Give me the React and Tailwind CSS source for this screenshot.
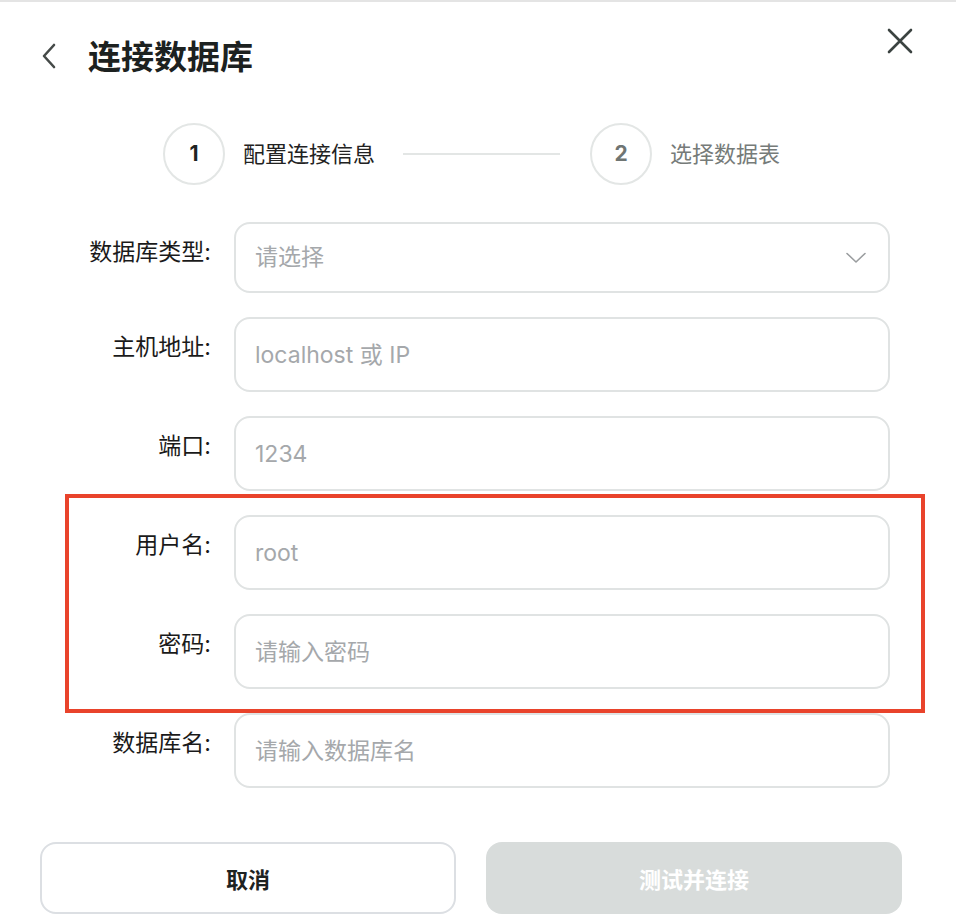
import { useState } from "react";

const fields = [
  { label: "主机地址:", placeholder: "localhost 或 IP" },
  { label: "端口:", placeholder: "1234" },
  { label: "用户名:", placeholder: "root" },
  { label: "密码:", placeholder: "请输入密码" },
  { label: "数据库名:", placeholder: "请输入数据库名" },
];

const Step = ({ n, text, active }) => (
  <div className="flex items-center gap-[18px]">
    <div
      className={`w-[62px] h-[62px] rounded-full border-2 border-[#e3e6e5] flex items-center justify-center text-[21px] font-bold ${
        active ? "text-[#1f2322]" : "text-[#6f7573]"
      }`}
    >
      {n}
    </div>
    <span className={`text-[22px] ${active ? "text-[#222]" : "text-[#767b79]"}`}>{text}</span>
  </div>
);

const App = () => {
  const [values, setValues] = useState({});

  return (
    <div className="w-[956px] h-[922px] bg-white relative overflow-hidden font-['Inter','Noto_Sans_CJK_SC',sans-serif]">
      <div className="h-[2px] bg-[#e4e4e4]" />

      <div className="flex justify-between pl-[40px] pr-[42px] pt-[22px]">
        <div className="flex items-center h-[64px] gap-[30px]">
          <svg width="18" height="26" viewBox="0 0 18 26" fill="none">
            <polyline points="14,2 4,13 14,24" stroke="#454a48" strokeWidth="2.6" strokeLinecap="round" strokeLinejoin="round" />
          </svg>
          <h1 className="text-[33px] font-bold text-[#1c2120] font-['Noto_Sans_CJK_SC',sans-serif]">连接数据库</h1>
        </div>
        <button className="mt-[3px] self-start">
          <svg width="28" height="28" viewBox="0 0 28 28" fill="none">
            <path d="M3 3 L25 25 M25 3 L3 25" stroke="#3b4341" strokeWidth="2.6" strokeLinecap="round" />
          </svg>
        </button>
      </div>

      <div className="flex items-center mt-[35px] pl-[163px] h-[62px]">
        <Step n="1" text="配置连接信息" active />
        <div className="w-[157px] h-[2px] bg-[#e3e6e5] ml-[28px] mr-[30px]" />
        <Step n="2" text="选择数据表" />
      </div>

      <div className="flex flex-col gap-[24px] mt-[37px]">
        <div className="flex gap-[23px]">
          <label className="w-[211px] text-right text-[23px] leading-[28px] pt-[16px] text-[#1a1a1a]">数据库类型:</label>
          <div className="w-[656px] h-[71px] rounded-[16px] border-2 border-[#e0e3e3] flex items-center justify-between pl-[19px] pr-[22px]">
            <span className="text-[23px] text-[#a5a8ab]">请选择</span>
            <svg width="20" height="12" viewBox="0 0 20 12" fill="none">
              <polyline points="1,1.5 10,10 19,1.5" stroke="#9a9d9f" strokeWidth="1.6" strokeLinecap="round" strokeLinejoin="round" />
            </svg>
          </div>
        </div>

        {fields.map((f) => (
          <div key={f.label} className="flex gap-[23px]">
            <label className="w-[211px] text-right text-[23px] leading-[28px] pt-[16px] text-[#1a1a1a]">{f.label}</label>
            <input
              className="w-[656px] h-[75px] rounded-[16px] border-2 border-[#e0e3e3] pl-[19px] text-[23px] text-[#222] placeholder:text-[#a5a8ab] outline-none"
              placeholder={f.placeholder}
              value={values[f.label] || ""}
              onChange={(e) => setValues({ ...values, [f.label]: e.target.value })}
            />
          </div>
        ))}
      </div>

      <div className="flex gap-[30px] px-[40px] mt-[54px]">
        <button className="w-[416px] h-[72px] rounded-[16px] border-2 border-[#dcdfe3] text-[22px] font-bold text-[#1e2221] font-['Noto_Sans_CJK_SC',sans-serif]">
          取消
        </button>
        <button className="w-[416px] h-[72px] rounded-[16px] bg-[#d8dcdb] text-[22px] font-bold text-white font-['Noto_Sans_CJK_SC',sans-serif]">
          测试并连接
        </button>
      </div>

      <div className="absolute left-[65px] top-[494px] w-[860px] h-[219px] border-[4px] border-[#e9432b] pointer-events-none" />
    </div>
  );
};

export default App;
